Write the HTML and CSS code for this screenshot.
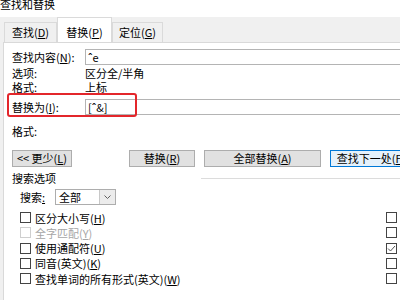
FILE: index.html
```html
<!DOCTYPE html>
<html lang="zh-CN">
<head>
    <meta charset="UTF-8">
    <title>查找和替换</title>
    <link rel="stylesheet" href="styles.css">
</head>
<body>
    <div class="title">查找和替换</div>

    <div class="dialog">
        <!-- 选项卡 -->
        <div class="tabs">
            <div class="tab tab-find">查找(<u>D</u>)</div>
            <div class="tab tab-replace active">替换(<u>P</u>)</div>
            <div class="tab tab-goto">定位(<u>G</u>)</div>
        </div>

        <div class="page">
            <div class="field">
                <span class="label">查找内容(<u>N</u>):</span>
                <div class="input">ˆe</div>
            </div>
            <div class="info first">
                <span class="label">选项:</span>
                <span>区分全/半角</span>
            </div>
            <div class="info">
                <span class="label">格式:</span>
                <span>上标</span>
            </div>

            <div class="field replace">
                <span class="label">替换为(<u>I</u>):</span>
                <div class="input">[ˆ&amp;]</div>
                <div class="highlight"></div>
            </div>
            <div class="info format">
                <span class="label">格式:</span>
            </div>

            <div class="buttons">
                <div class="btn btn-less">&lt;&lt; 更少(<u>L</u>)</div>
                <div class="btn btn-replace">替换(<u>R</u>)</div>
                <div class="btn btn-all">全部替换(<u>A</u>)</div>
                <div class="btn btn-next">查找下一处(<u>F</u>)</div>
            </div>

            <!-- 搜索选项 -->
            <div class="group-head">
                <span>搜索选项</span>
                <span class="rule"></span>
            </div>
            <div class="search-row">
                <span class="search-label">搜索<u>:</u></span>
                <div class="select">
                    <span class="select-value">全部</span>
                    <span class="select-arrow">
                        <svg width="7" height="4" viewBox="0 0 7 4"><path d="M0.5 0.5 L3.5 3.5 L6.5 0.5" fill="none" stroke="#606060" stroke-width="1"/></svg>
                    </span>
                </div>
            </div>

            <div class="options">
                <div class="option">
                    <span class="check"><span class="box"></span>区分大小写(<u>H</u>)</span>
                    <span class="box"></span>
                </div>
                <div class="option disabled">
                    <span class="check"><span class="box"></span>全字匹配(<u>Y</u>)</span>
                    <span class="box right"></span>
                </div>
                <div class="option">
                    <span class="check"><span class="box"></span>使用通配符(<u>U</u>)</span>
                    <span class="box checked">
                        <svg width="9" height="9" viewBox="0 0 9 9"><path d="M1 4.5 L3.5 7 L8 2" fill="none" stroke="#555" stroke-width="1"/></svg>
                    </span>
                </div>
                <div class="option">
                    <span class="check"><span class="box"></span>同音(英文)(<u>K</u>)</span>
                    <span class="box"></span>
                </div>
                <div class="option">
                    <span class="check"><span class="box"></span>查找单词的所有形式(英文)(<u>W</u>)</span>
                    <span class="box"></span>
                </div>
            </div>
        </div>
    </div>
</body>
</html>
```

FILE: styles.css
```css
body {
    margin: 0;
    width: 400px;
    height: 300px;
    overflow: hidden;
    background-color: #fff;
    font-family: "Noto Sans CJK SC", "Noto Sans", sans-serif;
    font-size: 11px;
    color: #000;
}
u {
    text-decoration-thickness: 1px;
    text-underline-offset: 1px;
}
.title {
    height: 17px;
    line-height: 9px;
    white-space: nowrap;
}
.dialog {
    background-color: #f0f0f0;
    padding-left: 3px;
}

/* 选项卡 */
.tabs {
    display: flex;
    align-items: flex-end;
    height: 25px;
    padding-left: 1px;
}
.tab {
    box-sizing: border-box;
    height: 20px;
    line-height: 19px;
    text-align: center;
    border: 1px solid #dadada;
    border-bottom: none;
    background-color: #f0f0f0;
    white-space: nowrap;
}
.tab-find {
    width: 53px;
}
.tab-replace {
    width: 55px;
}
.tab-goto {
    width: 51px;
}
.tab.active {
    height: 25px;
    padding-top: 5px;
    background-color: #fff;
}

.page {
    box-sizing: border-box;
    width: 470px;
    height: 260px;
    padding: 6px 0 0 8px;
    background-color: #fff;
    border-left: 1px solid #d9d9d9;
    border-top: 1px solid #d9d9d9;
}
.label {
    flex: none;
    width: 73px;
    white-space: nowrap;
}
.field {
    display: flex;
    align-items: center;
    height: 16px;
}
.input {
    box-sizing: border-box;
    width: 340px;
    height: 16px;
    padding-left: 2px;
    line-height: 14px;
    border: 1px solid #b4b4b4;
    background-color: #fff;
    white-space: nowrap;
}
.info {
    display: flex;
    height: 14px;
    line-height: 14px;
    white-space: nowrap;
}
.info.first {
    margin-top: 1px;
}
.replace {
    position: relative;
    margin-top: 5px;
}
.highlight {
    position: absolute;
    left: -5px;
    top: -6px;
    width: 130px;
    height: 24px;
    box-sizing: border-box;
    border: 2px solid #e3262b;
    border-radius: 3px;
}
.info.format {
    margin-top: 9px;
}

/* 按钮 */
.buttons {
    display: flex;
    height: 17px;
    margin-top: 12px;
}
.btn {
    flex: none;
    box-sizing: border-box;
    height: 17px;
    line-height: 15px;
    text-align: center;
    border: 1px solid #adadad;
    background-color: #e1e1e1;
    white-space: nowrap;
}
.btn-less {
    width: 60px;
}
.btn-replace {
    width: 66px;
    margin-left: 57px;
}
.btn-all {
    width: 117px;
    margin-left: 9px;
}
.btn-next {
    width: 82px;
    margin-left: 9px;
    border-color: #0078d7;
    background-color: #e5f1fb;
}

/* 搜索选项 */
.group-head {
    display: flex;
    align-items: center;
    height: 14px;
    margin-top: 4px;
    white-space: nowrap;
}
.rule {
    flex: 1;
    height: 1px;
    margin-left: 145px;
    background-color: #dcdcdc;
}
.search-row {
    display: flex;
    align-items: center;
    height: 16px;
    margin: 4px 0 0 8px;
}
.search-label {
    width: 35px;
    white-space: nowrap;
}
.select {
    display: flex;
    box-sizing: border-box;
    width: 61px;
    height: 16px;
    border: 1px solid #adadad;
    background-color: #fff;
}
.select-value {
    flex: 1;
    padding-left: 3px;
    line-height: 14px;
}
.select-arrow {
    display: flex;
    align-items: center;
    justify-content: center;
    width: 15px;
    border-left: 1px solid #c8c8c8;
    background-color: #ececec;
}
.options {
    width: 377px;
    margin: 5px 0 0 8px;
}
.option {
    display: flex;
    justify-content: space-between;
    align-items: center;
    height: 15.25px;
    white-space: nowrap;
}
.check {
    display: flex;
    align-items: center;
}
.box {
    display: flex;
    align-items: center;
    justify-content: center;
    box-sizing: border-box;
    width: 11px;
    height: 11px;
    border: 1px solid #444;
    background-color: #fff;
}
.check .box {
    margin-right: 4px;
}
.option.disabled .check {
    color: #a6a6a6;
}
.option.disabled .check .box {
    border-color: #cfcfcf;
}
.box.right {
    border-color: #444;
}
```
